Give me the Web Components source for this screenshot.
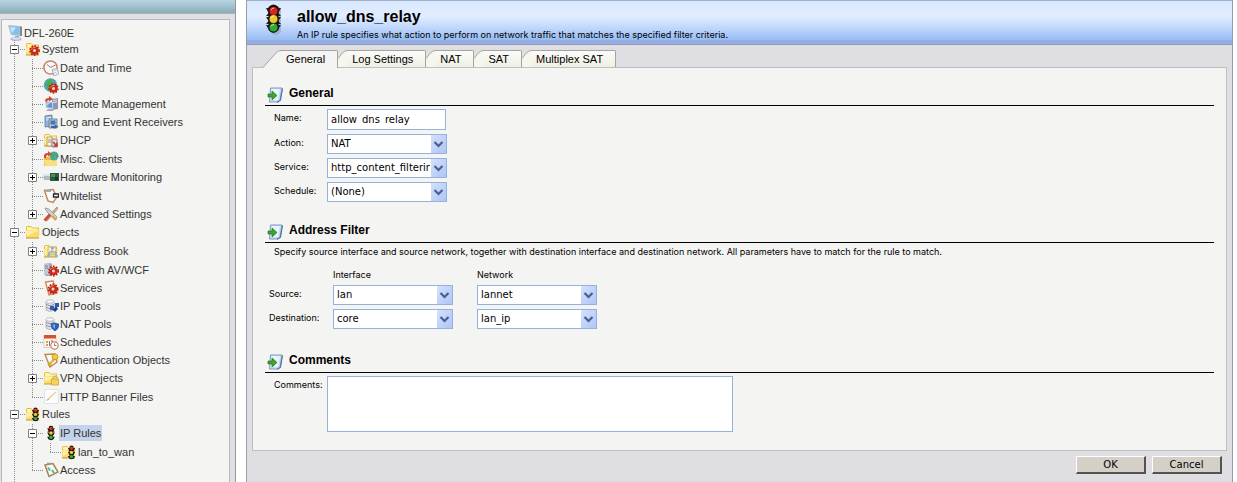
<!DOCTYPE html>
<html lang="en">
<head>
<meta charset="utf-8">
<title>allow_dns_relay</title>
<style>
  html, body { margin: 0; height: 100%; }
  body {
    --small: 9px/12px Inter, "Liberation Sans", Arial, sans-serif;
    --control: 10px/16px "DejaVu Sans", Verdana, sans-serif;
    background: #fff;
    color: #000;
    font: 11px/14px "Liberation Sans", Arial, sans-serif;
    overflow: hidden;
  }
</style>
</head>
<body>
<app-shell>
  <nav-panel slot="nav">
    <tree-root icon="computer" label="DFL-260E">
      <tree-node icon="system" label="System" state="open" group>
        <tree-node icon="clock" label="Date and Time"></tree-node>
        <tree-node icon="dns" label="DNS"></tree-node>
        <tree-node icon="remote" label="Remote Management"></tree-node>
        <tree-node icon="log" label="Log and Event Receivers"></tree-node>
        <tree-node icon="dhcp" label="DHCP" state="closed"></tree-node>
        <tree-node icon="misc" label="Misc. Clients"></tree-node>
        <tree-node icon="hardware" label="Hardware Monitoring" state="closed"></tree-node>
        <tree-node icon="whitelist" label="Whitelist"></tree-node>
        <tree-node icon="tools" label="Advanced Settings" state="closed" last></tree-node>
      </tree-node>
      <tree-node icon="folder" label="Objects" state="open" group>
        <tree-node icon="book" label="Address Book" state="closed"></tree-node>
        <tree-node icon="alg" label="ALG with AV/WCF"></tree-node>
        <tree-node icon="services" label="Services"></tree-node>
        <tree-node icon="ippool" label="IP Pools"></tree-node>
        <tree-node icon="natpool" label="NAT Pools"></tree-node>
        <tree-node icon="schedule" label="Schedules"></tree-node>
        <tree-node icon="auth" label="Authentication Objects"></tree-node>
        <tree-node icon="vpn" label="VPN Objects" state="closed"></tree-node>
        <tree-node icon="banner" label="HTTP Banner Files" last></tree-node>
      </tree-node>
      <tree-node icon="rules" label="Rules" state="open">
        <tree-node icon="light" label="IP Rules" state="open" selected>
          <tree-node icon="rules" label="lan_to_wan" last></tree-node>
        </tree-node>
        <tree-node icon="access" label="Access" last></tree-node>
      </tree-node>
      <tree-node icon="folder" label=""></tree-node>
    </tree-root>
  </nav-panel>

  <page-header slot="header">
    <span slot="title">allow_dns_relay</span>
    <span slot="text">An IP rule specifies what action to perform on network traffic that matches the specified filter criteria.</span>
  </page-header>

  <tab-panel>
    <tab-item slot="tab" active>General</tab-item>
    <tab-item slot="tab">Log Settings</tab-item>
    <tab-item slot="tab">NAT</tab-item>
    <tab-item slot="tab">SAT</tab-item>
    <tab-item slot="tab">Multiplex SAT</tab-item>

    <form-section heading="General">
      <form-field label="Name:" type="text" value="allow_dns_relay"></form-field>
      <form-field label="Action:" type="select" value="NAT"></form-field>
      <form-field label="Service:" type="select" value="http_content_filtering"></form-field>
      <form-field label="Schedule:" type="select" value="(None)"></form-field>
    </form-section>

    <form-section heading="Address Filter">
      <address-filter></address-filter>
    </form-section>

    <form-section heading="Comments">
      <form-field label="Comments:" type="textarea" value=""></form-field>
    </form-section>
  </tab-panel>

  <action-button slot="actions">OK</action-button>
  <action-button slot="actions">Cancel</action-button>
</app-shell>

<script>
const folder = '<path d="M1 3.500 2 2h4l1.500 1.500H14V14H1z" fill="#e9bd3c"/><path d="M2 3h4l1.500 1.500H13V6H2z" fill="#fff3ae"/><path d="M1 6h13.500L14 14H1z" fill="#f8db68"/><path d="M1.500 6.500H14L2 12z" fill="#fdf0a4"/><path d="M1 14h13" stroke="#c9962c"/>';
const gear = (x, y, r) => `<g transform="translate(${x} ${y})"><circle r="${r - 1}" fill="#c92a1a"/><circle r="${r - .6}" fill="none" stroke="#b8230f" stroke-width="1.600" stroke-dasharray="1.700 1.300"/><path d="M-${r - 2}-1A${r - 1.5} ${r - 1.5} 0 0 1 1-${r - 2}" stroke="#f08a6c" fill="none"/><circle r="1.500" fill="#f4ded0"/></g>`;
const lamps = (x, y, s) => `<g transform="translate(${x} ${y}) scale(${s})"><path d="M-4.500-5H4.500L3-2 4.500-1H-4.500L-3-2ZM-4.500 0H4.500L3 3H-3ZM-4.500 5H4.500L3 8H-3Z" fill="#2b1a12"/><path d="M-2.500-7Q0-9 2.500-7V8Q0 10-2.500 8z" fill="#1c1410"/><circle cy="-4.700" r="2.100" fill="#e02b1c"/><circle cy=".5" r="2.100" fill="#f2ce31"/><circle cy="5.700" r="2.100" fill="#2fb53c"/></g>`;
const discs = '<path d="M3 3.500v8.500q3.500 3 8 0V3.500z" fill="#dfe3e8" stroke="#9aa3ad" stroke-width=".7"/><ellipse cx="7" cy="3.500" rx="4" ry="1.700" fill="#fff" stroke="#9aa3ad" stroke-width=".7"/><path d="M3 6.500q4 2.500 8 0M3 9.500q4 2.500 8 0" stroke="#8d97a3" fill="none"/>';
const globe = (x, y, r) => `<circle cx="${x}" cy="${y}" r="${r}" fill="#5a9fd6"/><path d="M${x - r + 1} ${y - 1}Q${x - 2} ${y - r} ${x + 1} ${y - r + .5}L${x + 2} ${y - 1} ${x} ${y + 1} ${x + 1} ${y + r - 1} ${x - 2} ${y + r - 1}z" fill="#45b04e"/><path d="M${x + 2} ${y - r + 1}q2 2 ${r - 2} ${r}l-2 1z" fill="#3fa648"/>`;

const ICONS = {
  computer: '<path d="M0 0 12 1V11L3 10z" fill="#b4bdc9"/><path d="M1 1 11 2V9.500L3.500 9z" fill="#7cc4ef"/><path d="M2 2 8 2.500 4 8z" fill="#c5e8fb"/><path d="M12 1 14 2V11L12 11z" fill="#7f8793"/><path d="M7 11h4v2H7z" fill="#9ca4b1"/><ellipse cx="8" cy="14" rx="5.500" ry="1.900" fill="#b0b7dd"/><ellipse cx="8" cy="13.500" rx="4" ry="1" fill="#dfe2f3"/>',
  system: folder + gear(9.5, 9.5, 5.2),
  clock: '<circle cx="7.500" cy="7.500" r="6.600" fill="#fbfbfa" stroke="#cf8069" stroke-width="1.500"/><path d="M7.500 7.500 4 4.500M7.500 7.500l5-2.500" stroke="#b0695c"/><path d="M9 9.500l5-1 2 5-5 2.500z" fill="#f5f7fb" stroke="#9098ac" stroke-width=".8"/><path d="M10.500 11l3-.8M11 13l3-1" stroke="#a9b2c8" stroke-width=".7"/>',
  dns: globe(7.5, 7, 6.8) + gear(10.5, 10.5, 5),
  remote: '<path d="M9 3 15 2V13L9 14z" fill="#8f98aa"/><path d="M10 4l4-.6v1l-4 .6zM10 6l4-.6v1l-4 .6z" fill="#dfe4ee"/><path d="M2 5 10 6V13L3 12z" fill="#c6cedc"/><path d="M3 6.500 9 7V12L4 11z" fill="#5c95d8"/><path d="M3 6.500 7 7 4 10z" fill="#b2d3f3"/><path d="M3 15h7l1-2H5z" fill="#a3abc4"/><path d="M2 5Q2 2 6 2V0l4 3-4 2.500V4Q4 4 4 6z" fill="#d8432d"/>',
  log: '<path d="M2 2 9 1V12L2 13z" fill="#8fb3df" stroke="#5f7599" stroke-width=".8"/><path d="M3 4l5-.7M3 6l5-.7" stroke="#e6effa"/><path d="M6 5h8v9H6z" fill="#bdc5d1" stroke="#6a7485" stroke-width=".8"/><path d="M7.500 6.500h5v4h-5z" fill="#3c78be"/><path d="M8 12h4l-1.500-2 5 2.500-5 3L12 14H8z" fill="#3b5fa9"/>',
  dhcp: folder + '<path d="M4 5h5v9H4z" fill="#f5efe0" stroke="#aa8c5c" stroke-width=".8"/><path d="M5 8h3M5 10h3" stroke="#cc8468"/><path d="M9 7h5v8H9z" fill="#d9dde5" stroke="#7b7f91" stroke-width=".8"/><path d="M10 10l4 4M14 10.500v3.500h-3.500" stroke="#c83326" stroke-width="1.500" fill="none"/>',
  misc: '<g transform="translate(0 1)"><path d="M1 5h5l1 1h7v8H1z" fill="#e8bd3c"/><path d="M1 8h13v6H2z" fill="#fae07a"/></g>' + globe(11, 5, 4.5) + '<path d="M1 7Q0 2 5 2V0l4 3-4 2.500V4Q3 4 3 7z" fill="#dc4a31"/>',
  hardware: '<path d="M0 5h7v6H1z" fill="#b6bac0"/><path d="M0 5h7v2H0z" fill="#dfe2e5"/><path d="M7 4h9v8H7z" fill="#2c5c3b"/><path d="M8 5h4v3H8z" fill="#4b8a5b"/><path d="M12 8h3v3h-3z" fill="#163824"/>',
  whitelist: '<path d="M1.500 2.500 10 1.500 14 9 10 14.500 5 13z" fill="#fcfdfe" stroke="#c7874b" stroke-width="1.500"/><path d="M3 3h5" stroke="#91aed1" stroke-width="2"/><path d="M10.500 6h5v3h-5z" fill="#fff" stroke="#1e2440" stroke-width="1.300"/>',
  tools: '<path d="M2 14 12 3l2-2 1 1-2 3L4 15z" fill="#c8b08b" stroke="#8c7a60" stroke-width=".6"/><path d="M2 2 6 3 14 11l-1.500 3L4 6z" fill="#ccd1d6" stroke="#7b8084" stroke-width=".6"/><path d="M1.500 14.500 7 8.500" stroke="#d34830" stroke-width="2.600"/><path d="M9 10l4 4" stroke="#e2a33e" stroke-width="2.400"/>',
  folder,
  book: folder + '<path d="M5 4h8v7H5z" fill="#f6efc9" stroke="#b7a05a" stroke-width=".7"/><path d="M9 5v4M6 9h7M6 9v3M13 9v3" stroke="#7c99bb"/><path d="M4 12h3v2H4zM12 12h3v2h-3zM8 4h3v2H8z" fill="#8fb4db"/>',
  alg: '<path d="M1 2 7 1 9 2V14L3 14 1 12z" fill="#a1a7b7"/><path d="M1 2l5-1v12l-5-1z" fill="#c3c8d3"/><path d="M2 4h3M2 6h3" stroke="#7b8296"/>' + gear(10.5, 9, 5.3),
  services: '<path d="M2.500 2 10 1l4 12-8 2z" fill="#fff" stroke="#d08a57" stroke-width="1.400"/>' + gear(10, 9, 5.3),
  ippool: discs + '<path d="M7 8h4v4H7zM12 5h4v4h-4z" fill="#2c5fb4"/><path d="M10 12l3-4 2 3-3 3z" fill="#1d3f8b"/>',
  natpool: discs + '<path d="M8 8l4-1 4 1q0 5-4 7-4-2-4-7z" fill="#2865bb" stroke="#1c4283" stroke-width=".6"/><path d="M9.500 9l2.500-.7V13q-2-1.500-2.500-4z" fill="#7bb0e8"/>',
  schedule: '<path d="M1 1.500h12v12H1z" fill="#fdf8f5" stroke="#cbbdb8" stroke-width=".7"/><path d="M1 1h12v3.500H1z" fill="#d4532f"/><path d="M3 7h2v2H3zM3 10h2v2H3zM8 6h2v2H8z" fill="#d99a5c"/><path d="M6 7h1v5H6z" fill="#777"/><circle cx="11.500" cy="11.500" r="3.700" fill="#fff" stroke="#cf7d67" stroke-width="1.200"/><path d="M11.500 9.500v2h2" stroke="#666" fill="none" stroke-width=".8"/>',
  auth: '<path d="M2 2.500 12 2l2 8-7 5z" fill="#fdfbf4" stroke="#b98b4c" stroke-width="1.400"/><circle cx="12" cy="5" r="3" fill="#f6cb2f" stroke="#bb8a13" stroke-width=".7"/><path d="M10.500 7 5 12.500l1 1.500 2-1v-1.500l4-4z" fill="#f3c326" stroke="#a97c12" stroke-width=".6"/>',
  vpn: folder + '<path d="M8.500 9h7v6h-7z" fill="#f7d452" stroke="#c99b2b" stroke-width=".7"/><path d="M10 9V7.500q2-2.500 4 0V9" stroke="#c9b67a" stroke-width="1.300" fill="none"/>',
  banner: '<path d="M1.500.5h14v14h-14z" fill="#fbfcfd" stroke="#dfe4ea"/><path d="M5 10 13 3" stroke="#e9cf87" stroke-width="1.400"/><path d="M4 11.500l1.500-1.500" stroke="#777"/>',
  rules: folder + lamps(10.5, 8, .8),
  light: lamps(8, 7.5, .85),
  access: '<path d="M2 3 10 1.500 15 10 6 14.500z" fill="#f3fbf4" stroke="#a38557" stroke-width="1.500"/><path d="M5 5.500l2 3M9 8l2 3" stroke="#58b58c" stroke-width="2"/><path d="M4 1.500h4" stroke="#9d9d96" stroke-width="1.500"/>',
  section: '<path d="M3.500 1H15L13 13 9.500 15H2.500z" fill="#c8dcf4" stroke="#6f92bd" stroke-width=".9"/><path d="M4.500 2H13L11 13H3.500z" fill="#e9f2fd"/><path d="M15.500 1.500 13.500 13.500 10 15.500" stroke="#49688f" fill="none"/><path d="M1 7h4V4l5 4.500L5 13v-3H1z" fill="#3ba52f" stroke="#1f7420" stroke-width=".7"/>'
};

const attach = (element, css, html) => {
  const root = element.attachShadow({ mode: "open" });
  root.innerHTML = `<style>*{box-sizing:border-box}${css}</style>${html}`;
  return root;
};

customElements.define("ui-icon", class extends HTMLElement {
  connectedCallback() {
    if (this.shadowRoot) return;
    attach(this, ":host{display:block;flex:none;width:16px;height:16px}svg{display:block;width:100%;height:100%}",
      `<svg viewBox="0 0 16 16" aria-hidden="true">${ICONS[this.getAttribute("name")]}</svg>`);
  }
});

customElements.define("app-shell", class extends HTMLElement {
  connectedCallback() {
    attach(this, `
      :host { display: flex; height: 100vh; gap: 10px; padding-right: 4px; box-sizing: border-box; }
      aside { flex: 0 0 236px; min-width: 0; overflow: hidden; }
      main { flex: 1; min-width: 0; display: flex; flex-direction: column; background: #dfdee3; border: solid #9c9ca6; border-width: 0 1px; }
      footer { display: flex; justify-content: flex-end; gap: 6px; padding: 5px 10px; }
    `, `<aside><slot name="nav"></slot></aside>
      <main><slot name="header"></slot><slot></slot><footer><slot name="actions"></slot></footer></main>`);
  }
});

customElements.define("nav-panel", class extends HTMLElement {
  connectedCallback() {
    attach(this, `
      :host { display: flex; flex-direction: column; min-height: 100%; box-sizing: border-box; background: #e0dfe3; border-right: 1px solid #97979d; }
      .bar { height: 14px; background: linear-gradient(#b8d5e3, #8cabb7); border-bottom: 1px solid #a7b5bc; }
      .box { flex: 1; margin: 5px 5px 0 1px; padding: 5px 0 0 3px; background: #f4f4f2; border: 1px solid #b9b9bd; border-bottom: 0; }
    `, `<div class="bar"></div><div class="box"><slot></slot></div>`);
  }
});

customElements.define("tree-root", class extends HTMLElement {
  connectedCallback() {
    attach(this, `
      :host { display: block; color: #333; }
      a { display: flex; height: 15px; line-height: 16px; padding-left: 3px; color: inherit; text-decoration: none; }
    `, `<a href="#"><ui-icon name="${this.getAttribute("icon")}"></ui-icon>${this.getAttribute("label")}</a><slot></slot>`);
  }
});

customElements.define("tree-node", class extends HTMLElement {
  connectedCallback() {
    const state = this.getAttribute("state");
    const label = this.getAttribute("label");
    const toggle = state
      ? `<button aria-label="${state === "open" ? "Collapse" : "Expand"} ${label}"><svg viewBox="0 0 9 9"><path d="M.5.5h8v8h-8z" fill="#fff" stroke="#808080"/><path d="M2 4.500h5${state === "open" ? "" : "M4.500 2v5"}" stroke="#000"/></svg></button>`
      : "";
    attach(this, `
      :host { display: block; position: relative; }
      :host([group]) { margin-bottom: -1px; }
      :host::before { content: ""; position: absolute; left: 9px; top: 0; bottom: 0; width: 1px; background: repeating-linear-gradient(#8c8c8c 0 1px, transparent 1px 2px); }
      :host([last])::before { bottom: auto; height: 10px; }
      .row { display: flex; align-items: center; height: 18px; }
      :host([state]) .row { margin-bottom: 1px; }
      .joint { flex: none; width: 20px; height: 9px; padding-left: 5px; background: repeating-linear-gradient(90deg, #8c8c8c 0 1px, transparent 1px 2px) 9px 4px / 11px 1px no-repeat; }
      button { display: block; position: relative; width: 9px; height: 9px; padding: 0; border: 0; background: none; }
      svg { display: block; width: 9px; height: 9px; }
      a { line-height: 16px; padding: 0 1px; color: inherit; text-decoration: none; white-space: nowrap; }
      :host([selected]) a { background: #c3d3ea; }
      .kids { padding-left: 18px; }
    `, `<div class="row"><span class="joint">${toggle}</span><ui-icon name="${this.getAttribute("icon")}"></ui-icon>${label ? `<a href="#">${label}</a>` : ""}</div><div class="kids"><slot></slot></div>`);
  }
});

customElements.define("page-header", class extends HTMLElement {
  connectedCallback() {
    attach(this, `
      :host { display: flex; flex: none; gap: 12px; height: 45px; box-sizing: border-box; padding-left: 16px; border-top: 1px solid #9fb2cb; border-bottom: 1px solid #8e9ab5; background: linear-gradient(#d9e8fe, #e1edff 35%, #c3d9fb 60%, #98bcf5 90%, #95ade0 92%, #95ade0); }
      svg { flex: none; width: 22px; height: 34px; margin-top: 1px; }
      h1 { margin: 6px 0 0; font-size: 16px; line-height: 20px; }
      p { margin: 2px 0 0; font: var(--small); white-space: nowrap; }
    `, `<svg viewBox="0 0 22 34" aria-hidden="true">
        <path d="M6 6Q11 1 18 6V30Q12 36 7 30z" fill="#8fa0bf" opacity=".6"/>
        <path d="M3 6H18L15.500 11 18 14H3L5.500 11ZM3 15H18L15.500 19 18 22H3L5.500 19ZM3 23H18L15 28H6Z" fill="#2a201b"/>
        <path d="M5.500 5Q10.500 0 15.500 5V28Q10.500 34 5.500 28z" fill="#17120f"/>
        <circle cx="10.500" cy="9" r="4" fill="#d92222"/><circle cx="10.500" cy="17" r="4" fill="#efc62c"/><circle cx="10.500" cy="25.500" r="4" fill="#27ad35"/>
        <path d="M8 8q1-2 3-2M8 16q1-2 3-2M8 24.500q1-2 3-2" stroke="#fff" stroke-opacity=".7" fill="none"/>
      </svg><div><h1><slot name="title"></slot></h1><p><slot name="text"></slot></p></div>`);
  }
});

customElements.define("tab-panel", class extends HTMLElement {
  connectedCallback() {
    attach(this, `
      :host { display: block; padding: 5px 5px 0; }
      nav { display: flex; align-items: flex-start; height: 17px; padding-left: 11px; position: relative; }
      .panel { padding: 16px 12px 18px; background: #f4f4f2; border: 1px solid #bfbfc1; }
    `, `<nav role="tablist"><slot name="tab"></slot></nav><div class="panel"><slot></slot></div>`);
  }
});

customElements.define("tab-item", class extends HTMLElement {
  connectedCallback() {
    const active = this.hasAttribute("active");
    const slant = active
      ? '<svg width="18" height="18" viewBox="0 0 18 18"><path d="M0 18 13 3Q15.500.5 18 .5V18z" fill="#f4f4f2"/><path d="M0 17.500 13 3Q15.500.5 18 .5" fill="none" stroke="#a5a59f"/></svg>'
      : '<svg width="9" height="17" viewBox="0 0 9 17"><path d="M0 17V8L5 2Q6.500.5 9 .5V17z" fill="#f6f5ee"/><path d="M0 8.500 5 2.500Q7 .5 9 .5" fill="none" stroke="#a5a59f"/></svg>';
    attach(this, `
      :host { display: flex; flex: none; height: 17px; }
      :host([active]) { height: 18px; }
      svg { display: block; flex: none; }
      button { font: inherit; color: inherit; padding: 0 12px 0 5px; border: solid #a5a59f; border-width: 1px 1px 0 0; border-radius: 0 2px 0 0; background: linear-gradient(#fbfbf9, #f1efe3); white-space: nowrap; }
      :host([active]) button { background: #f4f4f2; padding-bottom: 1px; }
    `, `${slant}<button role="tab" aria-selected="${active}"><slot></slot></button>`);
  }
});

customElements.define("form-section", class extends HTMLElement {
  connectedCallback() {
    attach(this, `
      :host { display: block; }
      :host(:not(:last-of-type)) { margin-bottom: 19px; }
      header { display: flex; align-items: center; gap: 6px; height: 22px; padding-left: 2px; border-bottom: 1px solid #000; }
      h2 { margin: 0; font-size: 12px; line-height: 16px; padding-bottom: 4px; }
      .body { display: flex; flex-direction: column; gap: 4px; padding-top: 3px; }
    `, `<header><ui-icon name="section"></ui-icon><h2>${this.getAttribute("heading")}</h2></header><div class="body"><slot></slot></div>`);
  }
});

customElements.define("combo-box", class extends HTMLElement {
  connectedCallback() {
    attach(this, `
      :host { display: grid; width: 120px; height: 20px; }
      select, svg { grid-area: 1 / 1; }
      select { appearance: none; width: 100%; height: 20px; margin: 0; padding: 0 16px 0 3px; border: 1px solid #94b2da; border-radius: 0; background: #fff; color: #000; font: var(--control); }
      svg { justify-self: end; align-self: center; margin-right: 1px; pointer-events: none; }
    `, `<select aria-label="${this.getAttribute("label")}"><option>${this.getAttribute("value")}</option></select>
      <svg width="15" height="18" viewBox="0 0 15 18" aria-hidden="true"><defs><linearGradient id="g" x2="1" y2="1"><stop stop-color="#d5e1fd"/><stop offset="1" stop-color="#aec5f8"/></linearGradient></defs><path d="M0 0h15v18H0z" fill="url(#g)"/><path d="M3.500 7 7.500 11l4-4" fill="none" stroke="#4a608a" stroke-width="2.200"/></svg>`);
  }
});

customElements.define("form-field", class extends HTMLElement {
  connectedCallback() {
    const type = this.getAttribute("type");
    const label = this.getAttribute("label");
    const value = this.getAttribute("value");
    const control = {
      text: `<input id="c" type="text" value="${value}" spellcheck="false">`,
      textarea: `<textarea id="c"></textarea>`,
      select: `<combo-box label="${label}" value="${value}"></combo-box>`
    }[type];
    attach(this, `
      :host { display: grid; grid-template-columns: 53px minmax(0, 1fr); padding-left: 9px; }
      label { font: var(--small); line-height: 18px; white-space: nowrap; }
      input, textarea { display: block; appearance: none; margin: 0; border: 1px solid #94b2da; border-radius: 0; background: #fff; color: #000; font: var(--control); }
      input { width: 119px; height: 21px; padding: 0 3px; line-height: 19px; }
      textarea { width: 100%; max-width: 406px; height: 56px; padding: 2px 3px; resize: none; }
    `, `<label for="c">${label}</label>${control}`);
  }
});

customElements.define("address-filter", class extends HTMLElement {
  connectedCallback() {
    const row = (name, iface, net) => `<tr><th scope="row">${name}:</th><td><combo-box label="${name} interface" value="${iface}"></combo-box></td><td><combo-box label="${name} network" value="${net}"></combo-box></td></tr>`;
    attach(this, `
      :host { display: block; font: var(--small); padding-bottom: 3px; }
      p { margin: 0 0 11px 9px; }
      table { border-collapse: collapse; margin-left: 4px; }
      th { padding: 0; font-weight: normal; text-align: left; }
      tbody th { width: 64px; line-height: 18px; vertical-align: top; padding-top: 4px; }
      td { padding: 4px 24px 0 0; }
    `, `<p>Specify source interface and source network, together with destination interface and destination network. All parameters have to match for the rule to match.</p>
      <table><thead><tr><td></td><th scope="col">Interface</th><th scope="col">Network</th></tr></thead>
      <tbody>${row("Source", "lan", "lannet")}${row("Destination", "core", "lan_ip")}</tbody></table>`);
  }
});

customElements.define("action-button", class extends HTMLElement {
  connectedCallback() {
    attach(this, `
      :host { display: block; }
      button { display: block; width: 70px; height: 18px; padding: 1px 0 0; color: #000; background: #d4d0c8; border: solid; border-width: 1px 2px 2px 1px; border-color: #fff #55534f #55534f #fff; font: var(--control); line-height: 14px; }
    `, `<button type="button"><slot></slot></button>`);
  }
});
</script>
</body>
</html>
